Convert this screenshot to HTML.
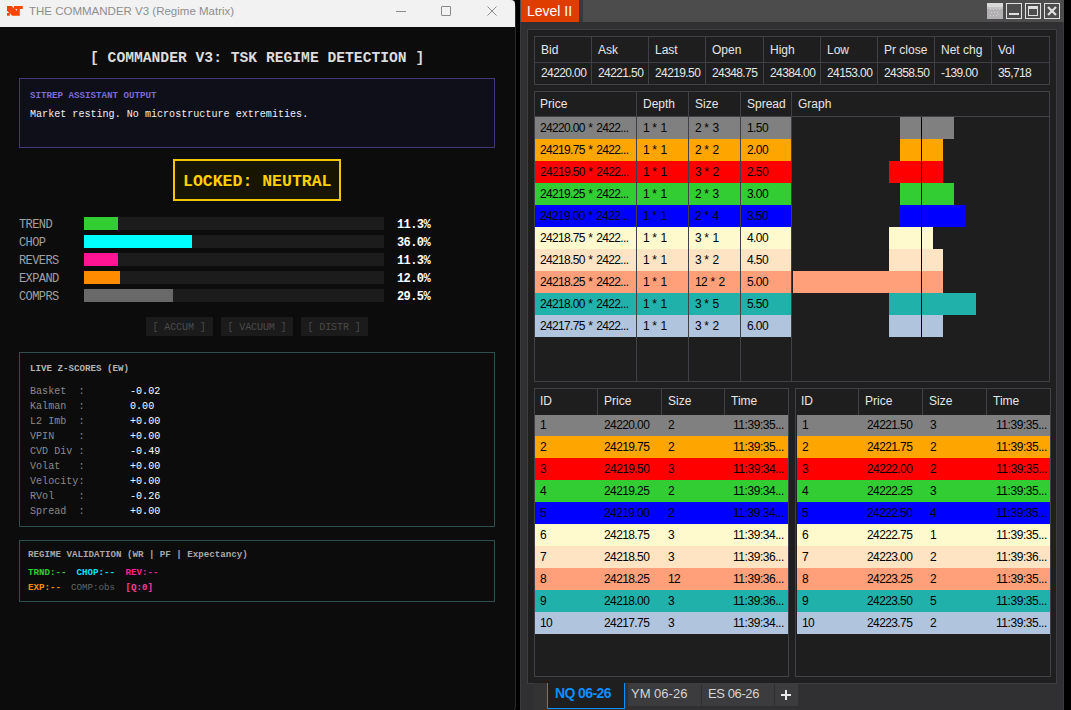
<!DOCTYPE html>
<html><head><meta charset="utf-8"><title>Commander</title>
<style>
*{margin:0;padding:0;box-sizing:border-box}
html,body{width:1071px;height:710px;overflow:hidden;background:#000}
body{position:relative;font-family:'Liberation Sans', sans-serif}
.abs{position:absolute}
.m{font-family:'Liberation Mono', monospace;white-space:pre;position:absolute;line-height:1}
.s{font-family:'Liberation Sans', sans-serif;white-space:pre;position:absolute;line-height:1}
</style></head><body>

<div class="abs" style="left:-10px;top:0;width:526px;height:714px;background:#0c0c0c;border:1px solid #2a2a2a;border-top:none;border-left:none;border-radius:0 8px 8px 0"></div>
<div class="abs" style="left:0;top:0;width:515px;height:27px;background:#f2f2f2;border-top-right-radius:4px"></div>
<svg class="abs" style="left:7px;top:6px" width="16" height="10" viewBox="0 0 16 10">
<path d="M0 0H4.7L6.9 2.3V0H15.8V2.9H12.8V9.8H5.1L2.85 7.1V9.8H0V7.1H2.2L0 4.7ZM8 2.9H10V4.9Z" fill="#ff4500" fill-rule="evenodd"/></svg>
<div class="s" style="left:29px;top:6px;font-size:11.5px;color:#8e8e8e">THE COMMANDER V3 (Regime Matrix)</div>
<div class="abs" style="left:396px;top:11px;width:10px;height:1px;background:#8a8a8a"></div>
<div class="abs" style="left:441px;top:6px;width:10px;height:10px;border:1px solid #8a8a8a;border-radius:1px"></div>
<svg class="abs" style="left:487px;top:6px" width="10" height="10" viewBox="0 0 10 10">
<path d="M0.5 0.5L9.5 9.5M9.5 0.5L0.5 9.5" stroke="#8a8a8a" stroke-width="1"/></svg>
<div class="m" style="left:90px;top:51px;font-size:14.67px;font-weight:bold;color:#dcdcdc">[ COMMANDER V3: TSK REGIME DETECTION ]</div>
<div class="abs" style="left:19px;top:78px;width:476px;height:70px;background:#0f0f1a;border:1px solid #42387a"></div>
<div class="m" style="left:30px;top:91px;font-size:9.17px;font-weight:bold;color:#7b6ad8">SITREP ASSISTANT OUTPUT</div>
<div class="m" style="left:30px;top:110px;font-size:10.08px;color:#f0f0f0">Market resting. No microstructure extremities.</div>
<div class="abs" style="left:173px;top:159px;width:168px;height:42px;background:#171400;border:2px solid #f0c800"></div>
<div class="m" style="left:183px;top:174px;font-size:16.5px;font-weight:bold;color:#ffd000">LOCKED: NEUTRAL</div>
<div class="m" style="left:19px;top:219px;font-size:12px;letter-spacing:-0.6px;color:#a0a0a0">TREND</div>
<div class="abs" style="left:84px;top:217px;width:300px;height:13px;background:#1c1c1c"></div>
<div class="abs" style="left:84px;top:217px;width:33.9px;height:13px;background:#32cd32"></div>
<div class="m" style="left:397px;top:219px;font-size:12px;letter-spacing:-0.6px;font-weight:bold;color:#ffffff">11.3%</div>
<div class="m" style="left:19px;top:237px;font-size:12px;letter-spacing:-0.6px;color:#a0a0a0">CHOP</div>
<div class="abs" style="left:84px;top:235px;width:300px;height:13px;background:#1c1c1c"></div>
<div class="abs" style="left:84px;top:235px;width:108.0px;height:13px;background:#00ffff"></div>
<div class="m" style="left:397px;top:237px;font-size:12px;letter-spacing:-0.6px;font-weight:bold;color:#ffffff">36.0%</div>
<div class="m" style="left:19px;top:255px;font-size:12px;letter-spacing:-0.6px;color:#a0a0a0">REVERS</div>
<div class="abs" style="left:84px;top:253px;width:300px;height:13px;background:#1c1c1c"></div>
<div class="abs" style="left:84px;top:253px;width:33.9px;height:13px;background:#ff1493"></div>
<div class="m" style="left:397px;top:255px;font-size:12px;letter-spacing:-0.6px;font-weight:bold;color:#ffffff">11.3%</div>
<div class="m" style="left:19px;top:273px;font-size:12px;letter-spacing:-0.6px;color:#a0a0a0">EXPAND</div>
<div class="abs" style="left:84px;top:271px;width:300px;height:13px;background:#1c1c1c"></div>
<div class="abs" style="left:84px;top:271px;width:36.0px;height:13px;background:#ff8c00"></div>
<div class="m" style="left:397px;top:273px;font-size:12px;letter-spacing:-0.6px;font-weight:bold;color:#ffffff">12.0%</div>
<div class="m" style="left:19px;top:291px;font-size:12px;letter-spacing:-0.6px;color:#a0a0a0">COMPRS</div>
<div class="abs" style="left:84px;top:289px;width:300px;height:13px;background:#1c1c1c"></div>
<div class="abs" style="left:84px;top:289px;width:88.5px;height:13px;background:#696969"></div>
<div class="m" style="left:397px;top:291px;font-size:12px;letter-spacing:-0.6px;font-weight:bold;color:#ffffff">29.5%</div>
<div class="abs" style="left:146px;top:317px;width:67px;height:19px;background:#1b1b1b;border-radius:1px"></div>
<div class="m" style="left:152.5px;top:323px;font-size:10.08px;letter-spacing:-0.15px;color:#4a4a4a">[ ACCUM ]</div>
<div class="abs" style="left:221px;top:317px;width:72px;height:19px;background:#1b1b1b;border-radius:1px"></div>
<div class="m" style="left:227.5px;top:323px;font-size:10.08px;letter-spacing:-0.15px;color:#4a4a4a">[ VACUUM ]</div>
<div class="abs" style="left:301px;top:317px;width:67px;height:19px;background:#1b1b1b;border-radius:1px"></div>
<div class="m" style="left:307.5px;top:323px;font-size:10.08px;letter-spacing:-0.15px;color:#4a4a4a">[ DISTR ]</div>
<div class="abs" style="left:19px;top:352px;width:476px;height:175px;border:1px solid #2f4f4f"></div>
<div class="m" style="left:30px;top:364px;font-size:9.17px;font-weight:bold;color:#b4b4b4">LIVE Z-SCORES (EW)</div>
<div class="m" style="left:30px;top:387px;font-size:10.08px;color:#8a8a8a">Basket  :</div>
<div class="m" style="left:130px;top:387px;font-size:10.08px;color:#ffffff">-0.02</div>
<div class="m" style="left:30px;top:402px;font-size:10.08px;color:#8a8a8a">Kalman  :</div>
<div class="m" style="left:130px;top:402px;font-size:10.08px;color:#ffffff">0.00</div>
<div class="m" style="left:30px;top:417px;font-size:10.08px;color:#8a8a8a">L2 Imb  :</div>
<div class="m" style="left:130px;top:417px;font-size:10.08px;color:#ffffff">+0.00</div>
<div class="m" style="left:30px;top:432px;font-size:10.08px;color:#8a8a8a">VPIN    :</div>
<div class="m" style="left:130px;top:432px;font-size:10.08px;color:#ffffff">+0.00</div>
<div class="m" style="left:30px;top:447px;font-size:10.08px;color:#8a8a8a">CVD Div :</div>
<div class="m" style="left:130px;top:447px;font-size:10.08px;color:#ffffff">-0.49</div>
<div class="m" style="left:30px;top:462px;font-size:10.08px;color:#8a8a8a">Volat   :</div>
<div class="m" style="left:130px;top:462px;font-size:10.08px;color:#ffffff">+0.00</div>
<div class="m" style="left:30px;top:477px;font-size:10.08px;color:#8a8a8a">Velocity:</div>
<div class="m" style="left:130px;top:477px;font-size:10.08px;color:#ffffff">+0.00</div>
<div class="m" style="left:30px;top:492px;font-size:10.08px;color:#8a8a8a">RVol    :</div>
<div class="m" style="left:130px;top:492px;font-size:10.08px;color:#ffffff">-0.26</div>
<div class="m" style="left:30px;top:507px;font-size:10.08px;color:#8a8a8a">Spread  :</div>
<div class="m" style="left:130px;top:507px;font-size:10.08px;color:#ffffff">+0.00</div>
<div class="abs" style="left:19px;top:540px;width:476px;height:62px;border:1px solid #2f4f4f"></div>
<div class="m" style="left:28px;top:550px;font-size:9.17px;font-weight:bold;color:#a8a8a8">REGIME VALIDATION (WR | PF | Expectancy)</div>
<div class="m" style="left:28px;top:568px;font-size:9.17px;font-weight:bold;color:#32cd32">TRND:--</div>
<div class="m" style="left:76.5px;top:568px;font-size:9.17px;font-weight:bold;color:#00e5ff">CHOP:--</div>
<div class="m" style="left:125.5px;top:568px;font-size:9.17px;font-weight:bold;color:#ff1f8f">REV:--</div>
<div class="m" style="left:28px;top:583px;font-size:9.17px;font-weight:bold;color:#ff8c00">EXP:--</div>
<div class="m" style="left:71px;top:583px;font-size:9.17px;font-weight:normal;color:#666666">COMP:obs</div>
<div class="m" style="left:125.5px;top:583px;font-size:9.17px;font-weight:bold;color:#ff3d9a">[Q:0]</div>
<div class="abs" style="left:520px;top:0;width:544px;height:710px;background:#303033"></div>
<div class="abs" style="left:520px;top:22px;width:1px;height:688px;background:#3a3a3a"></div>
<div class="abs" style="left:1063px;top:22px;width:1px;height:688px;background:#3a3a3e"></div>
<div class="abs" style="left:520px;top:0;width:544px;height:22px;background:#4c4c4c"></div>
<div class="abs" style="left:579px;top:0;width:4px;height:22px;background:#353a3f"></div>
<div class="abs" style="left:521px;top:0;width:58px;height:22px;background:#df3c00"></div>
<div class="s" style="left:527px;top:4px;font-size:14px;color:#ffffff">Level II</div>
<div class="abs" style="left:987px;top:3px;width:16px;height:16px;background:#b2b0b2"></div>
<div class="abs" style="left:987px;top:3px;width:16px;height:4px;background:#d8d8d8"></div>
<div class="abs" style="left:987px;top:7px;width:16px;height:2px;background:#c2c4c4"></div>
<svg class="abs" style="left:987px;top:3px" width="16" height="16" viewBox="0 0 16 16">
<g fill="#d0d0d0"><rect x="3" y="6" width="1" height="1"/><rect x="6" y="6" width="1" height="1"/><rect x="9" y="6" width="1" height="1"/><rect x="12" y="6" width="1" height="1"/>
<rect x="4" y="9" width="1" height="1"/><rect x="7" y="9" width="1" height="1"/><rect x="10" y="9" width="1" height="1"/>
<rect x="3" y="12" width="1" height="1"/><rect x="6" y="12" width="1" height="1"/><rect x="9" y="12" width="1" height="1"/><rect x="11" y="11" width="1" height="1"/></g></svg>
<div class="abs" style="left:1006px;top:3px;width:16px;height:16px;border:1px solid #e0e0e0"></div>
<div class="abs" style="left:1009px;top:13px;width:10px;height:2px;background:#e0e0e0"></div>
<div class="abs" style="left:1025px;top:3px;width:16px;height:16px;border:1px solid #e0e0e0"></div>
<div class="abs" style="left:1028px;top:6px;width:10px;height:10px;border:1px solid #e0e0e0;border-top-width:3px"></div>
<div class="abs" style="left:1044px;top:3px;width:16px;height:16px;border:1px solid #e0e0e0"></div>
<svg class="abs" style="left:1044px;top:3px" width="16" height="16" viewBox="0 0 16 16">
<path d="M4 4L12 12M12 4L4 12" stroke="#e0e0e0" stroke-width="2.2"/></svg>
<div class="abs" style="left:527px;top:29px;width:530px;height:655px;background:#1f1f1f;border:1px solid #3e3e42"></div>
<div class="abs" style="left:534px;top:36px;width:516px;height:49px;background:#1e1e1e;border:1px solid #404046"></div>
<div class="abs" style="left:535px;top:62px;width:514px;height:1px;background:#404046"></div>
<div class="s" style="left:541.0px;top:44px;font-size:12px;color:#e6e6e6">Bid</div>
<div class="s" style="left:541.0px;top:67px;font-size:12px;color:#e6e6e6;letter-spacing:-0.6px">24220.00</div>
<div class="abs" style="left:591px;top:37px;width:1px;height:47px;background:#404046"></div>
<div class="s" style="left:598.0px;top:44px;font-size:12px;color:#e6e6e6">Ask</div>
<div class="s" style="left:598.0px;top:67px;font-size:12px;color:#e6e6e6;letter-spacing:-0.6px">24221.50</div>
<div class="abs" style="left:648px;top:37px;width:1px;height:47px;background:#404046"></div>
<div class="s" style="left:655.0px;top:44px;font-size:12px;color:#e6e6e6">Last</div>
<div class="s" style="left:655.0px;top:67px;font-size:12px;color:#e6e6e6;letter-spacing:-0.6px">24219.50</div>
<div class="abs" style="left:705px;top:37px;width:1px;height:47px;background:#404046"></div>
<div class="s" style="left:712.0px;top:44px;font-size:12px;color:#e6e6e6">Open</div>
<div class="s" style="left:712.0px;top:67px;font-size:12px;color:#e6e6e6;letter-spacing:-0.6px">24348.75</div>
<div class="abs" style="left:763px;top:37px;width:1px;height:47px;background:#404046"></div>
<div class="s" style="left:770.0px;top:44px;font-size:12px;color:#e6e6e6">High</div>
<div class="s" style="left:770.0px;top:67px;font-size:12px;color:#e6e6e6;letter-spacing:-0.6px">24384.00</div>
<div class="abs" style="left:820px;top:37px;width:1px;height:47px;background:#404046"></div>
<div class="s" style="left:827.0px;top:44px;font-size:12px;color:#e6e6e6">Low</div>
<div class="s" style="left:827.0px;top:67px;font-size:12px;color:#e6e6e6;letter-spacing:-0.6px">24153.00</div>
<div class="abs" style="left:877px;top:37px;width:1px;height:47px;background:#404046"></div>
<div class="s" style="left:884.0px;top:44px;font-size:12px;color:#e6e6e6">Pr close</div>
<div class="s" style="left:884.0px;top:67px;font-size:12px;color:#e6e6e6;letter-spacing:-0.6px">24358.50</div>
<div class="abs" style="left:934px;top:37px;width:1px;height:47px;background:#404046"></div>
<div class="s" style="left:941.0px;top:44px;font-size:12px;color:#e6e6e6">Net chg</div>
<div class="s" style="left:941.0px;top:67px;font-size:12px;color:#e6e6e6;letter-spacing:-0.6px">-139.00</div>
<div class="abs" style="left:991px;top:37px;width:1px;height:47px;background:#404046"></div>
<div class="s" style="left:998.0px;top:44px;font-size:12px;color:#e6e6e6">Vol</div>
<div class="s" style="left:998.0px;top:67px;font-size:12px;color:#e6e6e6;letter-spacing:-0.6px">35,718</div>
<div class="abs" style="left:534px;top:91px;width:516px;height:291px;background:#1e1e1e;border:1px solid #404046"></div>
<div class="abs" style="left:535px;top:116px;width:514px;height:1px;background:#404046"></div>
<div class="s" style="left:540px;top:98px;font-size:12px;color:#e6e6e6">Price</div>
<div class="abs" style="left:636px;top:92px;width:1px;height:289px;background:#404046"></div>
<div class="s" style="left:643px;top:98px;font-size:12px;color:#e6e6e6">Depth</div>
<div class="abs" style="left:688px;top:92px;width:1px;height:289px;background:#404046"></div>
<div class="s" style="left:695px;top:98px;font-size:12px;color:#e6e6e6">Size</div>
<div class="abs" style="left:740px;top:92px;width:1px;height:289px;background:#404046"></div>
<div class="s" style="left:747px;top:98px;font-size:12px;color:#e6e6e6">Spread</div>
<div class="abs" style="left:791px;top:92px;width:1px;height:289px;background:#404046"></div>
<div class="s" style="left:798px;top:98px;font-size:12px;color:#e6e6e6">Graph</div>
<div class="abs" style="left:535px;top:117px;width:101px;height:22px;background:#808080"></div>
<div class="abs" style="left:637px;top:117px;width:51px;height:22px;background:#808080"></div>
<div class="abs" style="left:689px;top:117px;width:51px;height:22px;background:#808080"></div>
<div class="abs" style="left:741px;top:117px;width:50px;height:22px;background:#808080"></div>
<div class="s" style="left:540px;top:122px;font-size:12px;color:#000"><span style="letter-spacing:-0.65px">24220.00</span> * <span style="letter-spacing:-0.65px">2422...</span></div>
<div class="s" style="left:643px;top:122px;font-size:12px;color:#000"><span style="letter-spacing:-0.65px">1</span> * <span style="letter-spacing:-0.65px">1</span></div>
<div class="s" style="left:695px;top:122px;font-size:12px;color:#000"><span style="letter-spacing:-0.65px">2</span> * <span style="letter-spacing:-0.65px">3</span></div>
<div class="s" style="left:747px;top:122px;font-size:12px;color:#000;letter-spacing:-0.6px">1.50</div>
<div class="abs" style="left:900.0px;top:117px;width:21.0px;height:22px;background:#808080"></div>
<div class="abs" style="left:922px;top:117px;width:32.0px;height:22px;background:#808080"></div>
<div class="abs" style="left:535px;top:139px;width:101px;height:22px;background:#ffa500"></div>
<div class="abs" style="left:637px;top:139px;width:51px;height:22px;background:#ffa500"></div>
<div class="abs" style="left:689px;top:139px;width:51px;height:22px;background:#ffa500"></div>
<div class="abs" style="left:741px;top:139px;width:50px;height:22px;background:#ffa500"></div>
<div class="s" style="left:540px;top:144px;font-size:12px;color:#000"><span style="letter-spacing:-0.65px">24219.75</span> * <span style="letter-spacing:-0.65px">2422...</span></div>
<div class="s" style="left:643px;top:144px;font-size:12px;color:#000"><span style="letter-spacing:-0.65px">1</span> * <span style="letter-spacing:-0.65px">1</span></div>
<div class="s" style="left:695px;top:144px;font-size:12px;color:#000"><span style="letter-spacing:-0.65px">2</span> * <span style="letter-spacing:-0.65px">2</span></div>
<div class="s" style="left:747px;top:144px;font-size:12px;color:#000;letter-spacing:-0.6px">2.00</div>
<div class="abs" style="left:900.0px;top:139px;width:21.0px;height:22px;background:#ffa500"></div>
<div class="abs" style="left:922px;top:139px;width:21.0px;height:22px;background:#ffa500"></div>
<div class="abs" style="left:535px;top:161px;width:101px;height:22px;background:#ff0000"></div>
<div class="abs" style="left:637px;top:161px;width:51px;height:22px;background:#ff0000"></div>
<div class="abs" style="left:689px;top:161px;width:51px;height:22px;background:#ff0000"></div>
<div class="abs" style="left:741px;top:161px;width:50px;height:22px;background:#ff0000"></div>
<div class="s" style="left:540px;top:166px;font-size:12px;color:#000"><span style="letter-spacing:-0.65px">24219.50</span> * <span style="letter-spacing:-0.65px">2422...</span></div>
<div class="s" style="left:643px;top:166px;font-size:12px;color:#000"><span style="letter-spacing:-0.65px">1</span> * <span style="letter-spacing:-0.65px">1</span></div>
<div class="s" style="left:695px;top:166px;font-size:12px;color:#000"><span style="letter-spacing:-0.65px">3</span> * <span style="letter-spacing:-0.65px">2</span></div>
<div class="s" style="left:747px;top:166px;font-size:12px;color:#000;letter-spacing:-0.6px">2.50</div>
<div class="abs" style="left:889.0px;top:161px;width:32.0px;height:22px;background:#ff0000"></div>
<div class="abs" style="left:922px;top:161px;width:21.0px;height:22px;background:#ff0000"></div>
<div class="abs" style="left:535px;top:183px;width:101px;height:22px;background:#32cd32"></div>
<div class="abs" style="left:637px;top:183px;width:51px;height:22px;background:#32cd32"></div>
<div class="abs" style="left:689px;top:183px;width:51px;height:22px;background:#32cd32"></div>
<div class="abs" style="left:741px;top:183px;width:50px;height:22px;background:#32cd32"></div>
<div class="s" style="left:540px;top:188px;font-size:12px;color:#000"><span style="letter-spacing:-0.65px">24219.25</span> * <span style="letter-spacing:-0.65px">2422...</span></div>
<div class="s" style="left:643px;top:188px;font-size:12px;color:#000"><span style="letter-spacing:-0.65px">1</span> * <span style="letter-spacing:-0.65px">1</span></div>
<div class="s" style="left:695px;top:188px;font-size:12px;color:#000"><span style="letter-spacing:-0.65px">2</span> * <span style="letter-spacing:-0.65px">3</span></div>
<div class="s" style="left:747px;top:188px;font-size:12px;color:#000;letter-spacing:-0.6px">3.00</div>
<div class="abs" style="left:900.0px;top:183px;width:21.0px;height:22px;background:#32cd32"></div>
<div class="abs" style="left:922px;top:183px;width:32.0px;height:22px;background:#32cd32"></div>
<div class="abs" style="left:535px;top:205px;width:101px;height:22px;background:#0000ff"></div>
<div class="abs" style="left:637px;top:205px;width:51px;height:22px;background:#0000ff"></div>
<div class="abs" style="left:689px;top:205px;width:51px;height:22px;background:#0000ff"></div>
<div class="abs" style="left:741px;top:205px;width:50px;height:22px;background:#0000ff"></div>
<div class="s" style="left:540px;top:210px;font-size:12px;color:#000"><span style="letter-spacing:-0.65px">24219.00</span> * <span style="letter-spacing:-0.65px">2422...</span></div>
<div class="s" style="left:643px;top:210px;font-size:12px;color:#000"><span style="letter-spacing:-0.65px">1</span> * <span style="letter-spacing:-0.65px">1</span></div>
<div class="s" style="left:695px;top:210px;font-size:12px;color:#000"><span style="letter-spacing:-0.65px">2</span> * <span style="letter-spacing:-0.65px">4</span></div>
<div class="s" style="left:747px;top:210px;font-size:12px;color:#000;letter-spacing:-0.6px">3.50</div>
<div class="abs" style="left:900.0px;top:205px;width:21.0px;height:22px;background:#0000ff"></div>
<div class="abs" style="left:922px;top:205px;width:43.0px;height:22px;background:#0000ff"></div>
<div class="abs" style="left:535px;top:227px;width:101px;height:22px;background:#fffacd"></div>
<div class="abs" style="left:637px;top:227px;width:51px;height:22px;background:#fffacd"></div>
<div class="abs" style="left:689px;top:227px;width:51px;height:22px;background:#fffacd"></div>
<div class="abs" style="left:741px;top:227px;width:50px;height:22px;background:#fffacd"></div>
<div class="s" style="left:540px;top:232px;font-size:12px;color:#000"><span style="letter-spacing:-0.65px">24218.75</span> * <span style="letter-spacing:-0.65px">2422...</span></div>
<div class="s" style="left:643px;top:232px;font-size:12px;color:#000"><span style="letter-spacing:-0.65px">1</span> * <span style="letter-spacing:-0.65px">1</span></div>
<div class="s" style="left:695px;top:232px;font-size:12px;color:#000"><span style="letter-spacing:-0.65px">3</span> * <span style="letter-spacing:-0.65px">1</span></div>
<div class="s" style="left:747px;top:232px;font-size:12px;color:#000;letter-spacing:-0.6px">4.00</div>
<div class="abs" style="left:889.0px;top:227px;width:32.0px;height:22px;background:#fffacd"></div>
<div class="abs" style="left:922px;top:227px;width:11.0px;height:22px;background:#fffacd"></div>
<div class="abs" style="left:535px;top:249px;width:101px;height:22px;background:#ffe4c4"></div>
<div class="abs" style="left:637px;top:249px;width:51px;height:22px;background:#ffe4c4"></div>
<div class="abs" style="left:689px;top:249px;width:51px;height:22px;background:#ffe4c4"></div>
<div class="abs" style="left:741px;top:249px;width:50px;height:22px;background:#ffe4c4"></div>
<div class="s" style="left:540px;top:254px;font-size:12px;color:#000"><span style="letter-spacing:-0.65px">24218.50</span> * <span style="letter-spacing:-0.65px">2422...</span></div>
<div class="s" style="left:643px;top:254px;font-size:12px;color:#000"><span style="letter-spacing:-0.65px">1</span> * <span style="letter-spacing:-0.65px">1</span></div>
<div class="s" style="left:695px;top:254px;font-size:12px;color:#000"><span style="letter-spacing:-0.65px">3</span> * <span style="letter-spacing:-0.65px">2</span></div>
<div class="s" style="left:747px;top:254px;font-size:12px;color:#000;letter-spacing:-0.6px">4.50</div>
<div class="abs" style="left:889.0px;top:249px;width:32.0px;height:22px;background:#ffe4c4"></div>
<div class="abs" style="left:922px;top:249px;width:21.0px;height:22px;background:#ffe4c4"></div>
<div class="abs" style="left:535px;top:271px;width:101px;height:22px;background:#ffa07a"></div>
<div class="abs" style="left:637px;top:271px;width:51px;height:22px;background:#ffa07a"></div>
<div class="abs" style="left:689px;top:271px;width:51px;height:22px;background:#ffa07a"></div>
<div class="abs" style="left:741px;top:271px;width:50px;height:22px;background:#ffa07a"></div>
<div class="s" style="left:540px;top:276px;font-size:12px;color:#000"><span style="letter-spacing:-0.65px">24218.25</span> * <span style="letter-spacing:-0.65px">2422...</span></div>
<div class="s" style="left:643px;top:276px;font-size:12px;color:#000"><span style="letter-spacing:-0.65px">1</span> * <span style="letter-spacing:-0.65px">1</span></div>
<div class="s" style="left:695px;top:276px;font-size:12px;color:#000"><span style="letter-spacing:-0.65px">12</span> * <span style="letter-spacing:-0.65px">2</span></div>
<div class="s" style="left:747px;top:276px;font-size:12px;color:#000;letter-spacing:-0.6px">5.00</div>
<div class="abs" style="left:793.0px;top:271px;width:128.0px;height:22px;background:#ffa07a"></div>
<div class="abs" style="left:922px;top:271px;width:21.0px;height:22px;background:#ffa07a"></div>
<div class="abs" style="left:535px;top:293px;width:101px;height:22px;background:#20b2aa"></div>
<div class="abs" style="left:637px;top:293px;width:51px;height:22px;background:#20b2aa"></div>
<div class="abs" style="left:689px;top:293px;width:51px;height:22px;background:#20b2aa"></div>
<div class="abs" style="left:741px;top:293px;width:50px;height:22px;background:#20b2aa"></div>
<div class="s" style="left:540px;top:298px;font-size:12px;color:#000"><span style="letter-spacing:-0.65px">24218.00</span> * <span style="letter-spacing:-0.65px">2422...</span></div>
<div class="s" style="left:643px;top:298px;font-size:12px;color:#000"><span style="letter-spacing:-0.65px">1</span> * <span style="letter-spacing:-0.65px">1</span></div>
<div class="s" style="left:695px;top:298px;font-size:12px;color:#000"><span style="letter-spacing:-0.65px">3</span> * <span style="letter-spacing:-0.65px">5</span></div>
<div class="s" style="left:747px;top:298px;font-size:12px;color:#000;letter-spacing:-0.6px">5.50</div>
<div class="abs" style="left:889.0px;top:293px;width:32.0px;height:22px;background:#20b2aa"></div>
<div class="abs" style="left:922px;top:293px;width:54.0px;height:22px;background:#20b2aa"></div>
<div class="abs" style="left:535px;top:315px;width:101px;height:22px;background:#b0c4de"></div>
<div class="abs" style="left:637px;top:315px;width:51px;height:22px;background:#b0c4de"></div>
<div class="abs" style="left:689px;top:315px;width:51px;height:22px;background:#b0c4de"></div>
<div class="abs" style="left:741px;top:315px;width:50px;height:22px;background:#b0c4de"></div>
<div class="s" style="left:540px;top:320px;font-size:12px;color:#000"><span style="letter-spacing:-0.65px">24217.75</span> * <span style="letter-spacing:-0.65px">2422...</span></div>
<div class="s" style="left:643px;top:320px;font-size:12px;color:#000"><span style="letter-spacing:-0.65px">1</span> * <span style="letter-spacing:-0.65px">1</span></div>
<div class="s" style="left:695px;top:320px;font-size:12px;color:#000"><span style="letter-spacing:-0.65px">3</span> * <span style="letter-spacing:-0.65px">2</span></div>
<div class="s" style="left:747px;top:320px;font-size:12px;color:#000;letter-spacing:-0.6px">6.00</div>
<div class="abs" style="left:889.0px;top:315px;width:32.0px;height:22px;background:#b0c4de"></div>
<div class="abs" style="left:922px;top:315px;width:21.0px;height:22px;background:#b0c4de"></div>
<div class="abs" style="left:921px;top:117px;width:1px;height:220px;background:#000"></div>
<div class="abs" style="left:534px;top:388px;width:255px;height:289px;background:#1e1e1e;border:1px solid #404046"></div>
<div class="s" style="left:540px;top:395px;font-size:12px;color:#e6e6e6">ID</div>
<div class="abs" style="left:597px;top:389px;width:1px;height:26px;background:#404046"></div>
<div class="s" style="left:604px;top:395px;font-size:12px;color:#e6e6e6">Price</div>
<div class="abs" style="left:661px;top:389px;width:1px;height:26px;background:#404046"></div>
<div class="s" style="left:668px;top:395px;font-size:12px;color:#e6e6e6">Size</div>
<div class="abs" style="left:724px;top:389px;width:1px;height:26px;background:#404046"></div>
<div class="s" style="left:731px;top:395px;font-size:12px;color:#e6e6e6">Time</div>
<div class="abs" style="left:535px;top:415px;width:253px;height:21px;background:#808080"></div>
<div class="s" style="left:540px;top:419px;font-size:12px;color:#000;letter-spacing:-0.6px">1</div>
<div class="s" style="left:604px;top:419px;font-size:12px;color:#000;letter-spacing:-0.6px">24220.00</div>
<div class="s" style="left:668px;top:419px;font-size:12px;color:#000;letter-spacing:-0.6px">2</div>
<div class="s" style="left:733px;top:419px;font-size:12px;color:#000;letter-spacing:-0.45px">11:39:35...</div>
<div class="abs" style="left:535px;top:436px;width:253px;height:22px;background:#ffa500"></div>
<div class="s" style="left:540px;top:441px;font-size:12px;color:#000;letter-spacing:-0.6px">2</div>
<div class="s" style="left:604px;top:441px;font-size:12px;color:#000;letter-spacing:-0.6px">24219.75</div>
<div class="s" style="left:668px;top:441px;font-size:12px;color:#000;letter-spacing:-0.6px">2</div>
<div class="s" style="left:733px;top:441px;font-size:12px;color:#000;letter-spacing:-0.45px">11:39:35...</div>
<div class="abs" style="left:535px;top:458px;width:253px;height:22px;background:#ff0000"></div>
<div class="s" style="left:540px;top:463px;font-size:12px;color:#000;letter-spacing:-0.6px">3</div>
<div class="s" style="left:604px;top:463px;font-size:12px;color:#000;letter-spacing:-0.6px">24219.50</div>
<div class="s" style="left:668px;top:463px;font-size:12px;color:#000;letter-spacing:-0.6px">3</div>
<div class="s" style="left:733px;top:463px;font-size:12px;color:#000;letter-spacing:-0.45px">11:39:34...</div>
<div class="abs" style="left:535px;top:480px;width:253px;height:22px;background:#32cd32"></div>
<div class="s" style="left:540px;top:485px;font-size:12px;color:#000;letter-spacing:-0.6px">4</div>
<div class="s" style="left:604px;top:485px;font-size:12px;color:#000;letter-spacing:-0.6px">24219.25</div>
<div class="s" style="left:668px;top:485px;font-size:12px;color:#000;letter-spacing:-0.6px">2</div>
<div class="s" style="left:733px;top:485px;font-size:12px;color:#000;letter-spacing:-0.45px">11:39:34...</div>
<div class="abs" style="left:535px;top:502px;width:253px;height:22px;background:#0000ff"></div>
<div class="s" style="left:540px;top:507px;font-size:12px;color:#000;letter-spacing:-0.6px">5</div>
<div class="s" style="left:604px;top:507px;font-size:12px;color:#000;letter-spacing:-0.6px">24219.00</div>
<div class="s" style="left:668px;top:507px;font-size:12px;color:#000;letter-spacing:-0.6px">2</div>
<div class="s" style="left:733px;top:507px;font-size:12px;color:#000;letter-spacing:-0.45px">11:39:34...</div>
<div class="abs" style="left:535px;top:524px;width:253px;height:22px;background:#fffacd"></div>
<div class="s" style="left:540px;top:529px;font-size:12px;color:#000;letter-spacing:-0.6px">6</div>
<div class="s" style="left:604px;top:529px;font-size:12px;color:#000;letter-spacing:-0.6px">24218.75</div>
<div class="s" style="left:668px;top:529px;font-size:12px;color:#000;letter-spacing:-0.6px">3</div>
<div class="s" style="left:733px;top:529px;font-size:12px;color:#000;letter-spacing:-0.45px">11:39:34...</div>
<div class="abs" style="left:535px;top:546px;width:253px;height:22px;background:#ffe4c4"></div>
<div class="s" style="left:540px;top:551px;font-size:12px;color:#000;letter-spacing:-0.6px">7</div>
<div class="s" style="left:604px;top:551px;font-size:12px;color:#000;letter-spacing:-0.6px">24218.50</div>
<div class="s" style="left:668px;top:551px;font-size:12px;color:#000;letter-spacing:-0.6px">3</div>
<div class="s" style="left:733px;top:551px;font-size:12px;color:#000;letter-spacing:-0.45px">11:39:36...</div>
<div class="abs" style="left:535px;top:568px;width:253px;height:22px;background:#ffa07a"></div>
<div class="s" style="left:540px;top:573px;font-size:12px;color:#000;letter-spacing:-0.6px">8</div>
<div class="s" style="left:604px;top:573px;font-size:12px;color:#000;letter-spacing:-0.6px">24218.25</div>
<div class="s" style="left:668px;top:573px;font-size:12px;color:#000;letter-spacing:-0.6px">12</div>
<div class="s" style="left:733px;top:573px;font-size:12px;color:#000;letter-spacing:-0.45px">11:39:36...</div>
<div class="abs" style="left:535px;top:590px;width:253px;height:22px;background:#20b2aa"></div>
<div class="s" style="left:540px;top:595px;font-size:12px;color:#000;letter-spacing:-0.6px">9</div>
<div class="s" style="left:604px;top:595px;font-size:12px;color:#000;letter-spacing:-0.6px">24218.00</div>
<div class="s" style="left:668px;top:595px;font-size:12px;color:#000;letter-spacing:-0.6px">3</div>
<div class="s" style="left:733px;top:595px;font-size:12px;color:#000;letter-spacing:-0.45px">11:39:36...</div>
<div class="abs" style="left:535px;top:612px;width:253px;height:22px;background:#b0c4de"></div>
<div class="s" style="left:540px;top:617px;font-size:12px;color:#000;letter-spacing:-0.6px">10</div>
<div class="s" style="left:604px;top:617px;font-size:12px;color:#000;letter-spacing:-0.6px">24217.75</div>
<div class="s" style="left:668px;top:617px;font-size:12px;color:#000;letter-spacing:-0.6px">3</div>
<div class="s" style="left:733px;top:617px;font-size:12px;color:#000;letter-spacing:-0.45px">11:39:34...</div>
<div class="abs" style="left:795px;top:388px;width:256px;height:289px;background:#1e1e1e;border:1px solid #404046"></div>
<div class="s" style="left:801px;top:395px;font-size:12px;color:#e6e6e6">ID</div>
<div class="abs" style="left:858px;top:389px;width:1px;height:26px;background:#404046"></div>
<div class="s" style="left:865px;top:395px;font-size:12px;color:#e6e6e6">Price</div>
<div class="abs" style="left:922px;top:389px;width:1px;height:26px;background:#404046"></div>
<div class="s" style="left:929px;top:395px;font-size:12px;color:#e6e6e6">Size</div>
<div class="abs" style="left:986px;top:389px;width:1px;height:26px;background:#404046"></div>
<div class="s" style="left:993px;top:395px;font-size:12px;color:#e6e6e6">Time</div>
<div class="abs" style="left:797px;top:415px;width:253px;height:21px;background:#808080"></div>
<div class="s" style="left:802px;top:419px;font-size:12px;color:#000;letter-spacing:-0.6px">1</div>
<div class="s" style="left:867px;top:419px;font-size:12px;color:#000;letter-spacing:-0.6px">24221.50</div>
<div class="s" style="left:930px;top:419px;font-size:12px;color:#000;letter-spacing:-0.6px">3</div>
<div class="s" style="left:996px;top:419px;font-size:12px;color:#000;letter-spacing:-0.45px">11:39:35...</div>
<div class="abs" style="left:797px;top:436px;width:253px;height:22px;background:#ffa500"></div>
<div class="s" style="left:802px;top:441px;font-size:12px;color:#000;letter-spacing:-0.6px">2</div>
<div class="s" style="left:867px;top:441px;font-size:12px;color:#000;letter-spacing:-0.6px">24221.75</div>
<div class="s" style="left:930px;top:441px;font-size:12px;color:#000;letter-spacing:-0.6px">2</div>
<div class="s" style="left:996px;top:441px;font-size:12px;color:#000;letter-spacing:-0.45px">11:39:35...</div>
<div class="abs" style="left:797px;top:458px;width:253px;height:22px;background:#ff0000"></div>
<div class="s" style="left:802px;top:463px;font-size:12px;color:#000;letter-spacing:-0.6px">3</div>
<div class="s" style="left:867px;top:463px;font-size:12px;color:#000;letter-spacing:-0.6px">24222.00</div>
<div class="s" style="left:930px;top:463px;font-size:12px;color:#000;letter-spacing:-0.6px">2</div>
<div class="s" style="left:996px;top:463px;font-size:12px;color:#000;letter-spacing:-0.45px">11:39:35...</div>
<div class="abs" style="left:797px;top:480px;width:253px;height:22px;background:#32cd32"></div>
<div class="s" style="left:802px;top:485px;font-size:12px;color:#000;letter-spacing:-0.6px">4</div>
<div class="s" style="left:867px;top:485px;font-size:12px;color:#000;letter-spacing:-0.6px">24222.25</div>
<div class="s" style="left:930px;top:485px;font-size:12px;color:#000;letter-spacing:-0.6px">3</div>
<div class="s" style="left:996px;top:485px;font-size:12px;color:#000;letter-spacing:-0.45px">11:39:35...</div>
<div class="abs" style="left:797px;top:502px;width:253px;height:22px;background:#0000ff"></div>
<div class="s" style="left:802px;top:507px;font-size:12px;color:#000;letter-spacing:-0.6px">5</div>
<div class="s" style="left:867px;top:507px;font-size:12px;color:#000;letter-spacing:-0.6px">24222.50</div>
<div class="s" style="left:930px;top:507px;font-size:12px;color:#000;letter-spacing:-0.6px">4</div>
<div class="s" style="left:996px;top:507px;font-size:12px;color:#000;letter-spacing:-0.45px">11:39:35...</div>
<div class="abs" style="left:797px;top:524px;width:253px;height:22px;background:#fffacd"></div>
<div class="s" style="left:802px;top:529px;font-size:12px;color:#000;letter-spacing:-0.6px">6</div>
<div class="s" style="left:867px;top:529px;font-size:12px;color:#000;letter-spacing:-0.6px">24222.75</div>
<div class="s" style="left:930px;top:529px;font-size:12px;color:#000;letter-spacing:-0.6px">1</div>
<div class="s" style="left:996px;top:529px;font-size:12px;color:#000;letter-spacing:-0.45px">11:39:35...</div>
<div class="abs" style="left:797px;top:546px;width:253px;height:22px;background:#ffe4c4"></div>
<div class="s" style="left:802px;top:551px;font-size:12px;color:#000;letter-spacing:-0.6px">7</div>
<div class="s" style="left:867px;top:551px;font-size:12px;color:#000;letter-spacing:-0.6px">24223.00</div>
<div class="s" style="left:930px;top:551px;font-size:12px;color:#000;letter-spacing:-0.6px">2</div>
<div class="s" style="left:996px;top:551px;font-size:12px;color:#000;letter-spacing:-0.45px">11:39:36...</div>
<div class="abs" style="left:797px;top:568px;width:253px;height:22px;background:#ffa07a"></div>
<div class="s" style="left:802px;top:573px;font-size:12px;color:#000;letter-spacing:-0.6px">8</div>
<div class="s" style="left:867px;top:573px;font-size:12px;color:#000;letter-spacing:-0.6px">24223.25</div>
<div class="s" style="left:930px;top:573px;font-size:12px;color:#000;letter-spacing:-0.6px">2</div>
<div class="s" style="left:996px;top:573px;font-size:12px;color:#000;letter-spacing:-0.45px">11:39:35...</div>
<div class="abs" style="left:797px;top:590px;width:253px;height:22px;background:#20b2aa"></div>
<div class="s" style="left:802px;top:595px;font-size:12px;color:#000;letter-spacing:-0.6px">9</div>
<div class="s" style="left:867px;top:595px;font-size:12px;color:#000;letter-spacing:-0.6px">24223.50</div>
<div class="s" style="left:930px;top:595px;font-size:12px;color:#000;letter-spacing:-0.6px">5</div>
<div class="s" style="left:996px;top:595px;font-size:12px;color:#000;letter-spacing:-0.45px">11:39:35...</div>
<div class="abs" style="left:797px;top:612px;width:253px;height:22px;background:#b0c4de"></div>
<div class="s" style="left:802px;top:617px;font-size:12px;color:#000;letter-spacing:-0.6px">10</div>
<div class="s" style="left:867px;top:617px;font-size:12px;color:#000;letter-spacing:-0.6px">24223.75</div>
<div class="s" style="left:930px;top:617px;font-size:12px;color:#000;letter-spacing:-0.6px">2</div>
<div class="s" style="left:996px;top:617px;font-size:12px;color:#000;letter-spacing:-0.45px">11:39:35...</div>
<div class="abs" style="left:534px;top:683px;width:13px;height:27px;background:#333333"></div>
<div class="abs" style="left:547px;top:683px;width:78px;height:26px;background:#1f1f1f;border:1px solid #0a90ff;border-top:none"></div>
<div class="s" style="left:555px;top:686px;font-size:14px;letter-spacing:-0.6px;font-weight:bold;color:#0a90ff">NQ 06-26</div>
<div class="abs" style="left:628px;top:684px;width:73px;height:22px;background:#3c3c3f"></div>
<div class="s" style="left:631px;top:687px;font-size:13px;color:#d4d4d4;letter-spacing:0px">YM 06-26</div>
<div class="abs" style="left:702px;top:684px;width:72px;height:22px;background:#3c3c3f"></div>
<div class="s" style="left:708px;top:687px;font-size:13px;color:#d4d4d4;letter-spacing:-0.4px">ES 06-26</div>
<div class="abs" style="left:775px;top:684px;width:23px;height:22px;background:#3c3c3f"></div>
<div class="abs" style="left:781px;top:694px;width:10px;height:2px;background:#e8e8e8"></div>
<div class="abs" style="left:785px;top:690px;width:2px;height:10px;background:#e8e8e8"></div>
</body></html>
